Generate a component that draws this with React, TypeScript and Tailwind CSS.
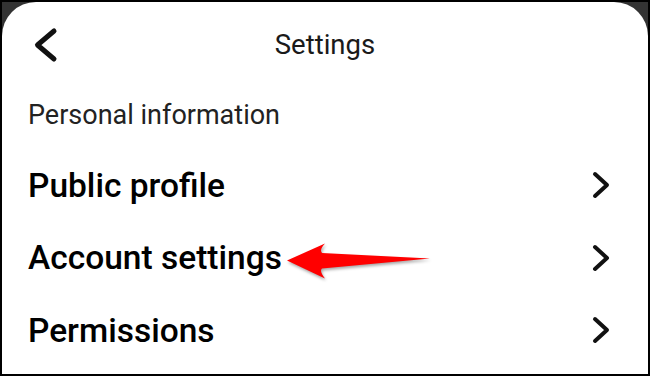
const items = ['Public profile', 'Account settings', 'Permissions'];

function BackIcon() {
  return (
    <svg width="30" height="40" viewBox="0 0 30 40" className="-ml-[1px]">
      <path
        d="M22 6 L5.5 20 L22 34"
        fill="none"
        stroke="#111"
        strokeWidth="5"
        strokeLinecap="round"
        strokeLinejoin="round"
      />
    </svg>
  );
}

function RowChevron() {
  return (
    <svg width="22" height="30" viewBox="0 0 22 30">
      <path
        d="M5 4 L17 15 L5 26"
        fill="none"
        stroke="#111"
        strokeWidth="4"
        strokeLinecap="round"
        strokeLinejoin="round"
      />
    </svg>
  );
}

function PointerArrow() {
  // red annotation arrow pointing at "Account settings"
  return (
    <svg
      className="absolute left-[280px] top-[236px] drop-shadow-[1px_2px_1.5px_rgba(0,0,0,0.35)]"
      width="152"
      height="46"
      viewBox="280 236 152 46"
    >
      <path
        d="M285 258.5 L323 241.5 Q317 248 320 251 L428 256.5 L320 266.5 Q317 269 323 276.5 Z"
        fill="#ff0000"
      />
    </svg>
  );
}

export default function App() {
  return (
    <div
      className="relative w-[650px] h-[376px] bg-[#333333] border-2 border-black overflow-hidden"
      style={{ fontFamily: 'Roboto, "Noto Sans", sans-serif' }}
    >
      <div className="w-full h-full bg-white rounded-t-[34px] flex flex-col">
        {/* Header */}
        <div className="grid grid-cols-[1fr_auto_1fr] items-center h-[86px] px-[31px]">
          <BackIcon />
          <h1 className="text-[27.5px] text-[#1a1a1a] leading-none">Settings</h1>
          <div />
        </div>

        <div className="px-[26px] h-[55px] flex items-center text-[27px] text-[#222] leading-none">
          Personal information
        </div>

        <div className="mt-[6px] flex flex-col">
          {items.map(label => (
            <div
              key={label}
              className="flex items-center justify-between h-[72.5px] pl-[26px] pr-[36px]"
            >
              <span className="text-[33.5px] font-medium text-black leading-none">{label}</span>
              <RowChevron />
            </div>
          ))}
        </div>
      </div>
      <PointerArrow />
    </div>
  );
}
